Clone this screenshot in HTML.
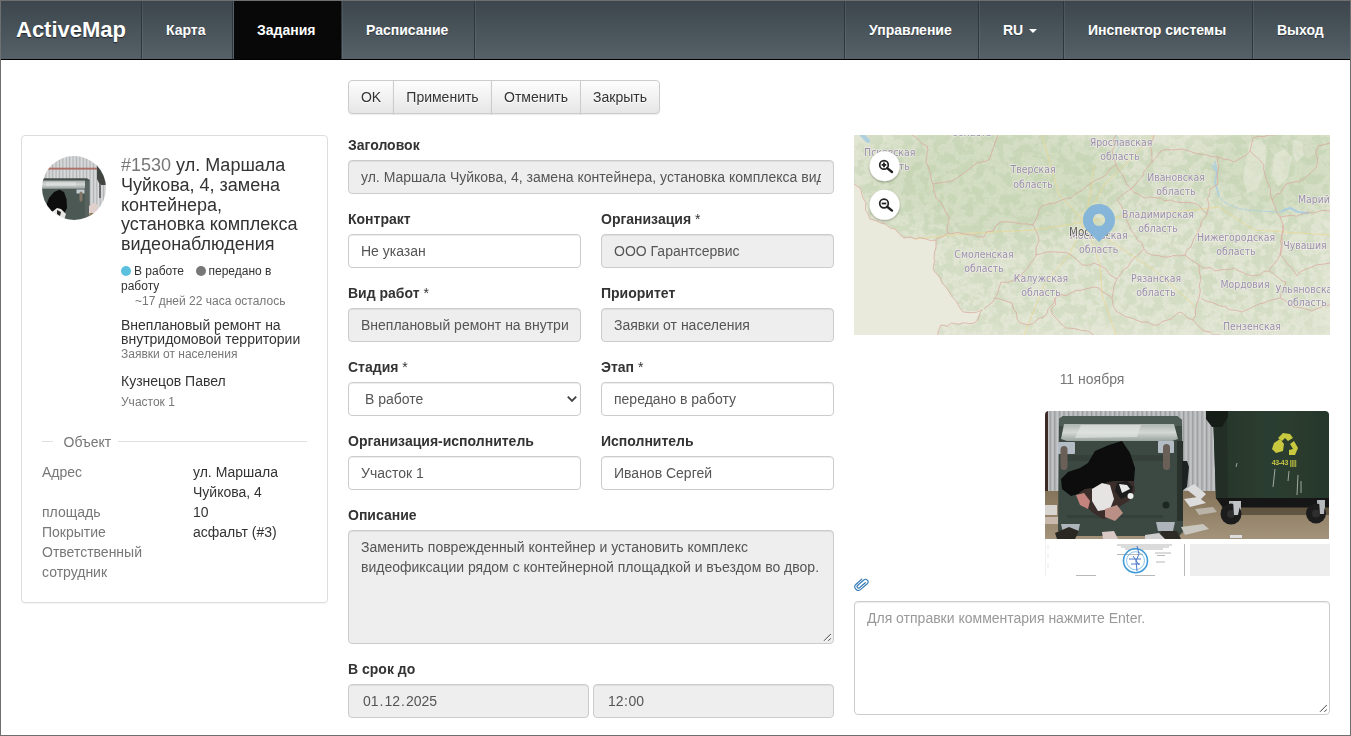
<!DOCTYPE html>
<html lang="ru">
<head>
<meta charset="utf-8">
<title>ActiveMap</title>
<style>
*{box-sizing:border-box;}
html,body{margin:0;padding:0;}
body{width:1351px;height:736px;overflow:hidden;background:#fff;font-family:"Liberation Sans",Arial,sans-serif;font-size:14px;line-height:20px;color:#333;position:relative;}
#frame{position:absolute;left:0;top:0;width:1351px;height:736px;border:1px solid #6f6f6f;pointer-events:none;z-index:100;}
#page{position:absolute;left:0;top:0;width:1351px;height:736px;overflow:hidden;}
.abs{position:absolute;}

/* NAVBAR */
#nav{position:absolute;left:1px;top:1px;width:1349px;height:59px;background:linear-gradient(to bottom,#3c464c 0%,#556068 100%);border-bottom:1px solid #000;}
#nav .brand{position:absolute;left:15px;top:0;height:58px;line-height:58px;font-size:22px;font-weight:bold;color:#fff;text-shadow:0 1px 1px rgba(0,0,0,.6);}
#nav .it{position:absolute;top:0;height:58px;line-height:58px;font-size:14px;font-weight:bold;color:#fff;text-align:left;padding-left:24px;white-space:nowrap;border-left:1px solid #2f373c;box-shadow:inset 1px 0 0 rgba(255,255,255,.07);text-shadow:0 1px 0 rgba(0,0,0,.4);}
#nav .it.act{background:linear-gradient(to right,#56626b 0,#56626b 1px,#080808 1px,#080808 100%);box-shadow:none;}
#nav .sep{position:absolute;top:0;height:58px;width:1px;background:#2f373c;}
.caret{display:inline-block;width:0;height:0;margin-left:2px;vertical-align:middle;border-top:4px solid #fff;border-right:4px solid transparent;border-left:4px solid transparent;}

/* BUTTONS */
#btns{position:absolute;left:348px;top:80px;height:34px;display:flex;}
#btns .b{height:34px;padding:6px 0;text-align:center;border:1px solid #ccc;margin-left:-1px;font-size:14px;line-height:20px;color:#333;background:linear-gradient(to bottom,#fdfdfd 0%,#e6e6e6 100%);text-shadow:0 1px 0 #fff;white-space:nowrap;box-shadow:inset 0 1px 0 rgba(255,255,255,.15),0 1px 1px rgba(0,0,0,.075);}
#btns .b:first-child{margin-left:0;border-radius:4px 0 0 4px;}
#btns .b:last-child{border-radius:0 4px 4px 0;}

/* FORM */
.lbl{position:absolute;font-weight:bold;font-size:14px;line-height:20px;color:#333;white-space:nowrap;}
.inp{position:absolute;height:34px;border:1px solid #ccc;border-radius:4px;background:#fff;box-shadow:inset 0 1px 1px rgba(0,0,0,.075);padding:6px 12px;font-size:14px;line-height:20px;color:#555;white-space:nowrap;overflow:hidden;}
.inp.dis{background:#eee;}

/* LEFT PANEL */
#panel{position:absolute;left:21px;top:135px;width:307px;height:468px;border:1px solid #ddd;border-radius:4px;background:#fff;box-shadow:0 1px 1px rgba(0,0,0,.05);}
#ava{position:absolute;left:42px;top:156px;width:64px;height:64px;border-radius:50%;overflow:hidden;}
#ttl{position:absolute;left:121px;top:156px;width:190px;font-size:18px;line-height:19.8px;color:#333;}
#ttl .n{color:#777;}
.t12{position:absolute;font-size:12px;line-height:15px;color:#333;white-space:nowrap;}
.t14{position:absolute;font-size:14px;line-height:20px;color:#333;white-space:nowrap;}
.g{color:#777;}
.dot{display:inline-block;width:10px;height:10px;border-radius:50%;vertical-align:-1px;margin-right:3px;}

.ta{position:absolute;border:1px solid #ccc;border-radius:4px;background:#fff;box-shadow:inset 0 1px 1px rgba(0,0,0,.075);padding:6px 12px;font-size:14px;line-height:20px;color:#555;}
.ta.dis{background:#eee;}
.grip{position:absolute;right:2px;bottom:2px;width:10px;height:10px;}
.ds{padding:0 1px;}
.clip{display:block;overflow:hidden;white-space:nowrap;}
.as{font-weight:normal;}
#content{position:absolute;left:0;top:0;width:1351px;height:736px;will-change:transform;}
</style>
</head>
<body>
<div id="page">

<!-- NAVBAR -->
<div id="nav">
  <div class="brand">ActiveMap</div>
  <div class="it" style="left:140px;width:91px;">Карта</div>
  <div class="it act" style="left:231px;width:109px;">Задания</div>
  <div class="it" style="left:340px;width:133px;">Расписание</div>
  <div class="it" style="left:473px;width:10px;border-left:1px solid #2f373c;"></div>
  <div class="it" style="left:843px;width:134px;">Управление</div>
  <div class="it" style="left:977px;width:85px;">RU <span class="caret"></span></div>
  <div class="it" style="left:1062px;width:189px;">Инспектор системы</div>
  <div class="it" style="left:1251px;width:98px;">Выход</div>
</div>

<div id="content">
<!-- BUTTON GROUP -->
<div id="btns">
  <div class="b" style="width:46px">OK</div><div class="b" style="width:99px">Применить</div><div class="b" style="width:90px">Отменить</div><div class="b" style="width:80px">Закрыть</div>
</div>

<!-- LEFT PANEL -->
<div id="panel"></div>
<!--AVA-->
<svg id="ava" width="64" height="64" viewBox="0 0 64 64" style="position:absolute;left:42px;top:156px;border-radius:50%;">
<defs><pattern id="corr2" width="3.400" height="64" patternUnits="userSpaceOnUse"><rect width="3.400" height="64" fill="#cfd0d1"/><rect width=".9" height="64" fill="#b0b2b4"/><rect x="1.900" width=".7" height="64" fill="#dcddde"/></pattern>
<linearGradient id="lid2" x1="0" y1="0" x2="0" y2="1"><stop offset="0" stop-color="#aab1ae"/><stop offset=".45" stop-color="#d3d7d5"/><stop offset="1" stop-color="#9aa29e"/></linearGradient>
<filter id="bl2" x="-5%" y="-5%" width="110%" height="110%"><feGaussianBlur stdDeviation=".5"/></filter></defs>
<g filter="url(#bl2)">
<rect width="64" height="64" fill="url(#corr2)"/>
<rect x="4" y="11.700" width="56" height="1.900" fill="#ad6f67"/>
<path d="M55 9h9v20h-6l-3-6z" fill="#3f4443"/><rect x="57" y="28" width="2" height="14" fill="#6a6e6c"/>
<path d="M0 24l2-1.600h43l2.500 1.600V64H0z" fill="#4c5852"/>
<path d="M0 24l2-1.600h43l2.500 1.600v1H0z" fill="#454d49"/>
<path d="M0 24.600h43l.8 7-1.500 1.200H0z" fill="url(#lid2)"/>
<path d="M4 26h30v4H4z" fill="#e2e5e3" opacity=".55"/>
<path d="M43 24.500h4.500V64H43z" fill="#59645e"/>
<rect x="34.500" y="33.500" width="8" height="4" fill="#c6ccd2"/><rect x="37.500" y="35.500" width="3" height="10" rx="1.500" fill="#85776a"/>
<path d="M3 64L4 50 7 42 12 36 17.500 33.700 22 36 24.500 43 25 52 22 58 21 64Z" fill="#0c0c0c"/>
<path d="M10 56l5-4 4 1 5 5-2 6H9z" fill="#e9e7e5"/><path d="M15 54l4 2-1 4-3-2z" fill="#222"/>
<path d="M47 50l5-3 4 2-1 7-8 3z" fill="#dfd0cb"/>
<rect x="47.500" y="57" width="17" height="8" fill="#8d7a5c"/>
</g>
</svg>
<!--/AVA-->
<div id="ttl"><span class="n">#1530</span> ул. Маршала<br>Чуйкова, 4, замена<br>контейнера,<br>установка комплекса<br>видеонаблюдения</div>
<div class="t12" style="left:121px;top:264px;"><span class="dot" style="background:#5bc0de"></span>В работе</div>
<div class="t12" style="left:195.5px;top:264px;"><span class="dot" style="background:#777"></span>передано в</div>
<div class="t12" style="left:121px;top:279px;">работу</div>
<div class="t12 g" style="left:135px;top:294px;">~17 дней 22 часа осталось</div>
<div class="t14" style="left:121px;top:318px;line-height:14px;">Внеплановый ремонт на<br>внутридомовой территории</div>
<div class="t12 g" style="left:121px;top:347px;">Заявки от населения</div>
<div class="t14" style="left:121px;top:371px;">Кузнецов Павел</div>
<div class="t12 g" style="left:121px;top:395px;">Участок 1</div>
<div class="abs" style="left:42px;top:441px;width:11px;height:1px;background:#e0e0e0;"></div>
<div class="abs" style="left:118px;top:441px;width:189px;height:1px;background:#e0e0e0;"></div>
<div class="t14 g" style="left:63.5px;top:432px;">Объект</div>
<div class="t14 g" style="left:42px;top:462px;">Адрес</div>
<div class="t14" style="left:193px;top:462px;">ул. Маршала<br>Чуйкова, 4</div>
<div class="t14 g" style="left:42px;top:502px;">площадь</div>
<div class="t14" style="left:193px;top:502px;">10</div>
<div class="t14 g" style="left:42px;top:522px;">Покрытие</div>
<div class="t14" style="left:193px;top:522px;">асфальт (#3)</div>
<div class="t14 g" style="left:42px;top:542px;">Ответственный<br>сотрудник</div>


<!-- FORM -->
<div class="lbl" style="left:348px;top:135px;">Заголовок</div>
<div class="inp dis" style="left:348px;top:160px;width:486px;"><span class="clip">ул. Маршала Чуйкова, 4, замена контейнера, установка комплекса видеонаблюдения</span></div>
<div class="lbl" style="left:348px;top:209px;">Контракт</div>
<div class="inp" style="left:348px;top:234px;width:233px;">Не указан</div>
<div class="lbl" style="left:601px;top:209px;">Организация <span class="as">*</span></div>
<div class="inp dis" style="left:601px;top:234px;width:233px;">ООО Гарантсервис</div>
<div class="lbl" style="left:348px;top:283px;">Вид работ <span class="as">*</span></div>
<div class="inp dis" style="left:348px;top:308px;width:233px;"><span class="clip">Внеплановый ремонт на внутридомовой территории</span></div>
<div class="lbl" style="left:601px;top:283px;">Приоритет</div>
<div class="inp dis" style="left:601px;top:308px;width:233px;">Заявки от населения</div>
<div class="lbl" style="left:348px;top:357px;">Стадия <span class="as">*</span></div>
<div class="inp" style="left:348px;top:382px;width:233px;padding-left:16px;">В работе<svg class="chev" width="12" height="8" viewBox="0 0 12 8" style="position:absolute;right:2.3px;top:12.2px;"><path d="M1.8 1.7 L6 5.9 L10.2 1.7" fill="none" stroke="#444" stroke-width="1.9"/></svg></div>
<div class="lbl" style="left:601px;top:357px;">Этап <span class="as">*</span></div>
<div class="inp" style="left:601px;top:382px;width:233px;">передано в работу</div>
<div class="lbl" style="left:348px;top:431px;">Организация-исполнитель</div>
<div class="inp" style="left:348px;top:456px;width:233px;">Участок 1</div>
<div class="lbl" style="left:601px;top:431px;">Исполнитель</div>
<div class="inp" style="left:601px;top:456px;width:233px;">Иванов Сергей</div>
<div class="lbl" style="left:348px;top:505px;">Описание</div>
<div class="ta dis" style="left:348px;top:530px;width:486px;height:114px;">Заменить поврежденный контейнер и установить комплекс видеофиксации рядом с контейнерной площадкой и въездом во двор.<svg class="grip" viewBox="0 0 10 10"><path d="M9.9 3.9 L3.4 10.4 M9.9 8.3 L7.8 10.4" stroke="#fff" stroke-width="1" fill="none"/><path d="M9.9 2.9 L3 9.8 M9.9 7.3 L7.4 9.8" stroke="#444" stroke-width="1" fill="none"/></svg></div>
<div class="lbl" style="left:348px;top:659px;">В срок до</div>
<div class="inp dis" style="left:348px;top:684px;width:241px;padding-left:14px;">01<span class="ds">.</span>12<span class="ds">.</span>2025</div>
<div class="inp dis" style="left:593px;top:684px;width:241px;padding-left:14px;">12<span class="ds" style="padding:0 .5px">:</span>00</div>


<!-- RIGHT -->
<!--MAP-->
<svg id="map" class="abs" style="left:854px;top:135px;" width="476" height="200" viewBox="0 0 476 200">
<defs>
<filter id="fo" x="0" y="0" width="100%" height="100%" color-interpolation-filters="sRGB">
<feTurbulence type="fractalNoise" baseFrequency="0.1" numOctaves="4" seed="7" result="n"/>
<feColorMatrix in="n" type="matrix" values="0 0 0 0 0.77  0 0 0 0 0.83  0 0 0 0 0.70  0 11 0 0 -5.3" result="g"/>
<feComposite in="g" in2="SourceGraphic" operator="in"/>
</filter>
<filter id="fo2" x="0" y="0" width="100%" height="100%" color-interpolation-filters="sRGB">
<feTurbulence type="fractalNoise" baseFrequency="0.24" numOctaves="3" seed="23" result="n"/>
<feColorMatrix in="n" type="matrix" values="0 0 0 0 0.80  0 0 0 0 0.85  0 0 0 0 0.74  12 0 0 0 -5.9" result="g"/>
<feComposite in="g" in2="SourceGraphic" operator="in"/>
</filter>
<radialGradient id="mg" cx="0.33" cy="0.2" r="0.75"><stop offset="0" stop-color="#000" stop-opacity="1"/><stop offset=".4" stop-color="#000" stop-opacity=".85"/><stop offset=".75" stop-color="#000" stop-opacity=".5"/><stop offset="1" stop-color="#000" stop-opacity=".35"/></radialGradient>
<radialGradient id="mg0" cx="0.33" cy="0.2" r="0.8"><stop offset="0" stop-color="#cbd8ba" stop-opacity=".7"/><stop offset=".5" stop-color="#d2ddc2" stop-opacity=".4"/><stop offset="1" stop-color="#dbe2cd" stop-opacity=".25"/></radialGradient>
<filter id="bsh" x="-30%" y="-30%" width="160%" height="170%"><feDropShadow dx="0" dy="1" stdDeviation="1" flood-color="#000" flood-opacity=".35"/></filter>
<clipPath id="lc"><path d="M0 0H476V200H84L87 190L120 188L128 175L109 177L102 166L88 148L79 133L82 105L50 103L41 94L16 84L7 54L0 49Z"/></clipPath><filter id="b9" x="-20%" y="-20%" width="140%" height="140%"><feGaussianBlur stdDeviation="14"/></filter>
<clipPath id="mc"><rect width="476" height="200"/></clipPath>
</defs>
<g clip-path="url(#mc)">
<rect width="476" height="200" fill="#e9e9dc"/>
<g clip-path="url(#lc)">
<g filter="url(#b9)"><rect width="476" height="200" fill="#d5dfc6" opacity=".38"/><ellipse cx="150" cy="42" rx="115" ry="62" fill="#c9d7b7" opacity=".55"/><ellipse cx="425" cy="28" rx="75" ry="52" fill="#c9d7b7" opacity=".55"/><ellipse cx="35" cy="40" rx="45" ry="50" fill="#cfdcbf" opacity=".4"/><ellipse cx="300" cy="40" rx="70" ry="40" fill="#cfdcbf" opacity=".3"/></g>
<g filter="url(#fo)"><g filter="url(#b9)"><rect width="476" height="200" fill="#000" opacity=".42"/><ellipse cx="150" cy="42" rx="115" ry="62" fill="#000" opacity=".6"/><ellipse cx="425" cy="28" rx="75" ry="52" fill="#000" opacity=".6"/><ellipse cx="35" cy="40" rx="45" ry="50" fill="#000" opacity=".4"/><ellipse cx="300" cy="40" rx="70" ry="40" fill="#000" opacity=".3"/><ellipse cx="370" cy="120" rx="40" ry="30" fill="#000" opacity=".2"/></g></g>
<g filter="url(#fo2)" opacity=".6"><g filter="url(#b9)"><rect width="476" height="200" fill="#000" opacity=".45"/><ellipse cx="150" cy="42" rx="115" ry="62" fill="#000" opacity=".5"/><ellipse cx="425" cy="28" rx="75" ry="52" fill="#000" opacity=".5"/></g></g>
</g>
<g fill="#eeeee2" opacity=".45"><path d="M395 8l12-4 6 10-2 22-8 18-10 4-4-16 4-20zM420 20l10-6 8 8-4 20-10 10-6-12zM440 5l8 2 2 14-8 6-4-10z"/></g>
<g fill="none" stroke="#aecfe0" stroke-width="1.6" stroke-linecap="round"><path d="M361 27l2 10-2 10 4 14M358 30l4 6"/><path d="M428 76l8-3 8 4 10 1" stroke-width="2.2"/><path d="M8 0l6 6" stroke-width="4"/><path d="M364 61q10 12 30 14t34 2" stroke-width=".8"/><path d="M262 0l4 10-6 12" stroke-width=".8"/></g>
<g fill="none" stroke="#ead68f" stroke-width=".8" opacity=".9"><path d="M231 87L205 60 196 28 188 0M231 87L180 95 120 98 60 104M231 87L215 120 190 150 170 200M231 87L246 130 248 160 262 200M231 87L262 110 300 135 340 170M231 87L275 80 330 76 365 72 400 95 476 100M231 87L250 50 280 20 300 0M231 87L236 60 240 30"/><circle cx="231" cy="87" r="5"/><circle cx="231" cy="87" r="10" stroke-width=".5"/></g>
<path d="M0 49 L7 54 L7.7 59.1 L9.6 64.3 L11.9 67.6 L11.4 75.1 L13.7 78.1 L16 84 L22.6 85.9 L27.1 87.9 L31.4 88.9 L36.4 93.2 L41 94 L45.6 99.3 L50 103 L55.9 101.9 L61.5 104 L65.4 102.5 L72.5 104.2 L77.4 105.9 L82 105 L82.1 111.9 L80.5 117.2 L80 123.2 L80.8 126.1 L79 133 L80.8 137.1 L86.5 142.8 L88 148 L91.9 151.9 L95 156.6 L98 161.8 L102 166 L105.8 172.8 L109 177 L115.9 177.7 L122.8 177.2 L128 175 L125.9 178.3 L123.8 185.2 L120 188 L115.8 188.6 L109.7 187.7 L104.6 189.2 L97.3 187.9 L93.6 191.2 L87 190 L84.2 196 L84 200 M58 0 L62.7 2.5 L67.3 8.2 L73 11 L73.9 14.9 L72.7 20.2 L72 27 L74.4 32 L76.7 39.5 L77.3 45.1 L79 49 L79.9 54.6 L82 63 L86.3 66.5 L90 73 L91.5 77.2 L95 82 L95 86.2 L92.9 93.8 L94 98 L87.4 102.5 L82 104 M79 49 L86.6 47.6 L91.5 47.1 L98 46 L102.9 43.1 L107 40 L112.6 36.4 L115.4 33.9 L120 30 L124.5 27.4 L132.2 26.1 L136 24 L137.8 17.1 L139.1 13.6 L141 8 L144 0 M94 98 L97.5 98.7 L104.4 97.3 L109 99 L114.7 99.6 L120.1 100 L125.4 102 L130 102 L132.7 96.8 L139.1 96 L142 90.6 L147 87 L152.6 86.8 L157.2 87.1 L163 88 L167.9 89 L173 88.9 L179 90 L182.1 83.7 L183.7 81.3 L185.1 74.9 L188 71 L195.5 68.7 L201 68 L205.3 66.1 L212.3 63.4 L217 63 L221 59.1 L227.3 56 L231.9 51.7 L234.9 49.9 L240 46 L247.2 42.8 L252 40 L256.1 33.8 L262 30 L260.1 22 L258 16 L260.3 11.7 L259.7 4.6 L262 0 M179 90 L182 95.8 L184 100.2 L185 106 L182.3 112.3 L182 120 L180.3 123.6 L176.2 128.4 L174 133 L170.1 136.4 L168 139.2 L163 144 L156.1 146.4 L153.5 147.6 L147 147 L144.8 153.8 L144.4 156.8 L141 163 L138.1 167.7 L134.2 170.4 L130 174 M182 120 L187.7 118.5 L193.8 116.6 L201 117 L206.6 117.3 L212.7 117.5 L217 120 L223.8 125.6 L228 130 L235.4 130.3 L240 128 L247.3 131.2 L252 134 L255.9 139.8 L263 144 M141 163 L145.6 164 L152.9 166.4 L158 168 L159.7 174.4 L162.4 177.5 L163.2 184.2 L166 188 L174 190 L179.3 188.2 L184.2 183.7 L190 182 L192.9 178.3 L194.4 173.4 L199.6 168.7 L201 163 L207.4 159.8 L212.1 160.8 L217 158 L221.3 155.8 L227.8 155.1 L234 153.4 L240 152 L245.4 153.2 L247.6 156.3 L252.3 158.9 L258 163 M201 163 L201.5 169.5 L197.7 173.7 L198 179 L202.1 183.1 L206.9 188.8 L212 193 L217.8 193.3 L222 194 L227.3 195.4 L234 196 L240 200 M298 27 L303.2 21.1 L307 16 L312 14.3 L319.3 15 L326 14 L333.2 15.3 L339.6 17.7 L345 19 L351.1 19.6 L357.7 21.6 L364 22 M262 30 L264.7 35.4 L267.9 38.8 L271.1 45 L272.6 49 L277 54 L280.3 50.7 L285.4 44.6 L288.8 41.4 L290.2 35.9 L293.3 32.5 L298 27 L297.9 22.6 L297.6 16.2 L296 10 L298.7 5.2 L300 0 M277 54 L280.1 57.3 L284.1 58.9 L290 63 L296.3 61.9 L299.5 62.5 L307.4 63.2 L310.1 65.7 L317 65 L321.3 66.9 L328.6 67.6 L334.9 67.5 L339 68 L344.6 70.2 L349.2 75.4 L353 79 L354.3 72.7 L355 70.4 L353.4 63.4 L355.6 60 L356 54 L364 49 L363.2 42.6 L363.2 38.6 L364.8 32.5 L363.6 27.1 L364 22 M277 54 L271.9 57.4 L266.3 61.3 L263 65 L267.2 70.4 L269.1 75.2 L271 82 L274.6 89.3 L277 95 L280.8 99.8 L283.4 105 L288 108.1 L290 114 L292.7 117.8 L298 120 L305 120.7 L309.2 122 L315 122 L319.3 120.6 L324.7 120.9 L331 120 L333.1 114.5 L336.9 112.1 L339 106 L340.7 102.2 L343.4 98.1 L346.3 91.8 L347.4 86.5 L350.6 83.1 L353 79 M263 144 L260.3 149.9 L259.1 157.5 L258 163 L259.4 171.6 L263 177 L267.7 179.3 L272.4 182.1 L278.3 183.2 L282 185 L287.4 187 L294.1 187.2 L299.2 190.2 L304 190 L308.3 186.5 L312 185.5 L317.8 183.7 L322.7 178.8 L326 177 L329.3 178.9 L333.7 183 L339 185 L341.6 180.8 L341.2 175.2 L342.9 168.3 L345 163 L346.4 155.3 L345 151.4 L347 144 L345.3 136.5 L345 130 L340.6 127.2 L334.1 122.8 L331 120 M290 114 L285.1 118.6 L279.7 123.6 L276 128 L274.2 131.7 L269.6 134.8 L265.5 140.5 L263 144 M345 130 L349.1 133.2 L357 132.7 L361 136 L368.7 134.6 L374.5 134.8 L380 133 L384.1 135.6 L390 138 L393.5 139.8 L399 141 L405.8 139.9 L409.8 136.4 L415 136 L418.6 130.2 L423 125.9 L426 120 L426.7 114 L427.5 110.4 L426.5 106.2 L428.5 98.8 L429.9 93.9 L429 90 L426 82 M347 163 L351.2 165.7 L356.8 167.2 L361.7 168.9 L366 171 L370.9 171.5 L375.6 174.7 L383.3 175.6 L388 177 L394.3 174.3 L398.3 172.1 L405.7 168.8 L410 168 L415.3 165.5 L421.5 164.2 L426 163 L427.5 157.4 L430.1 153.2 L432 147 L427.3 145.4 L422.3 140.8 L418 137.5 L415 136 M364 22 L370.2 24.4 L373.7 24.3 L380 27 L385.1 24.1 L391.7 20.5 L396 16 L397.8 8.4 L399 3 L404.2 1.3 L410.1 1.7 L414.5 -0 L421 0 M418 65 L422.4 59.5 L426 58.3 L429.9 52.6 L432 49 L438.5 47.3 L445.1 46.5 L451 43 L457.1 37.4 L462 33 L463.7 27.4 L463.3 22.7 L461.9 17.4 L464 11 L470.5 9.5 L476 8 M418 65 L420.7 70.5 L422.4 76.4 L426 82 L430 81.3 L437.5 80.3 L442.7 81.2 L448 79 L454.9 77.2 L460.1 78.2 L463.4 76.8 L469.5 75.2 L476 76 M429 90 L428.6 96.4 L427.4 101.2 L428.1 103.8 L428.1 110.3 L427.9 115.7 L426 120 L430.2 123.7 L433.8 129.8 L437.4 132.4 L440.4 136.8 L443 141 L446.5 136.8 L451.1 134.5 L456.2 132.7 L462 130 L469.6 129.1 L476 128 M339 185 L342.4 189.1 L345.7 192.2 L350 196 L356.2 197 L359.6 199.9 L366 200 M426 163 L431.4 165.6 L434.9 169.1 L440 172 L446.3 172.4 L450.4 173.7 L458 176 L464.9 172.9 L469.9 171 L476 170 M396 16 L399.7 19.6 L405 24.3 L410 30 L409.6 33.8 L411.2 40 L412 43.5 L414.4 49.7 L416.4 53.6 L416.5 59.7 L418 65 " fill="none" stroke="#dba79d" stroke-width=".9" stroke-linejoin="round" opacity=".8"/>
<g font-family="'DejaVu Sans Condensed','DejaVu Sans',sans-serif" font-stretch="condensed" font-size="10.4" fill="#9b8fae" stroke="#f3f1ea" stroke-opacity=".7" stroke-width="1.4" paint-order="stroke" stroke-linejoin="round"><text x="118" y="1" text-anchor="middle">область</text><text x="35.7" y="20.5" text-anchor="middle">Псковская</text><text x="36" y="34.5" text-anchor="middle">область</text><text x="179" y="38" text-anchor="middle">Тверская</text><text x="179" y="53" text-anchor="middle">область</text><text x="130" y="123" text-anchor="middle">Смоленская</text><text x="130" y="137" text-anchor="middle">область</text><text x="187" y="147" text-anchor="middle">Калужская</text><text x="187" y="161" text-anchor="middle">область</text><text x="267" y="11" text-anchor="middle">Ярославская</text><text x="266" y="24.5" text-anchor="middle">область</text><text x="322" y="46" text-anchor="middle">Ивановская</text><text x="322" y="60" text-anchor="middle">область</text><text x="304" y="83" text-anchor="middle">Владимирская</text><text x="304" y="96.5" text-anchor="middle">область</text><text x="382" y="106" text-anchor="middle">Нижегородская</text><text x="382" y="120" text-anchor="middle">область</text><text x="451" y="114" text-anchor="middle">Чувашия</text><text x="302" y="147" text-anchor="middle">Рязанская</text><text x="302" y="161" text-anchor="middle">область</text><text x="391" y="153" text-anchor="middle">Мордовия</text><text x="453" y="171" text-anchor="middle">область</text><text x="398" y="195" text-anchor="middle">Пензенская</text><text x="244.7" y="104.4" text-anchor="middle">Московская</text><text x="244.7" y="117.5" text-anchor="middle">область</text><text x="444" y="68">Марий Эл</text><text x="421.6" y="158">Ульяновская</text></g>
<text x="215" y="101.4" font-family="'DejaVu Sans Condensed','DejaVu Sans',sans-serif" font-stretch="condensed" font-size="11.5" fill="#5e5e5e" stroke="#f3f1ea" stroke-opacity=".7" stroke-width="1.4" paint-order="stroke">Москва</text>
<path d="M245 107L232.300 94.700A16 16 0 1 1 257.700 94.700ZM245 78.800a6.100 6.100 0 1 0 .01 0Z" fill="#85b6d9" fill-rule="evenodd"/>
<g filter="url(#bsh)"><circle cx="30.600" cy="31.200" r="15" fill="#fff"/><circle cx="30.600" cy="69.800" r="15" fill="#fff"/></g>
<g fill="none" stroke="#222" stroke-width="1.700"><circle cx="30" cy="29.900" r="4.300"/><path d="M33.200 33.100L38 37" stroke-width="2.400" stroke-linecap="round"/><path d="M27.700 29.900h4.600M30 27.600v4.600" stroke-width="1.800"/>
<circle cx="30" cy="68.500" r="4.300"/><path d="M33.200 71.700L38 75.600" stroke-width="2.400" stroke-linecap="round"/><path d="M27.700 68.500h4.600" stroke-width="1.800"/></g>
</g>
</svg>
<!--/MAP-->
<!--PHOTO-->
<svg id="photo" class="abs" style="left:1045px;top:411px;" width="284" height="128" viewBox="0 0 284 128">
<defs>
<pattern id="corr" width="4.6" height="128" patternUnits="userSpaceOnUse"><rect width="4.6" height="128" fill="#b7b9ba"/><rect x="0" width="1.2" height="128" fill="#999b9d"/><rect x="2.6" width=".9" height="128" fill="#c9cbcc"/></pattern>
<linearGradient id="gnd" x1="0" y1="0" x2="0" y2="1"><stop offset="0" stop-color="#85745a"/><stop offset="1" stop-color="#a3937a"/></linearGradient>
<linearGradient id="lid" x1="0" y1="0" x2="0" y2="1"><stop offset="0" stop-color="#aeb6b1"/><stop offset=".5" stop-color="#d3d8d5"/><stop offset="1" stop-color="#9aa39e"/></linearGradient>
<linearGradient id="rc" x1="0" y1="0" x2="1" y2="0"><stop offset="0" stop-color="#27352b"/><stop offset=".5" stop-color="#2b3e30"/><stop offset="1" stop-color="#27382c"/></linearGradient>
<clipPath id="pc"><path d="M0 4a4 4 0 0 1 4-4h276a4 4 0 0 1 4 4v124H0z"/></clipPath>
<filter id="bl" x="-5%" y="-5%" width="110%" height="110%"><feGaussianBlur stdDeviation=".5"/></filter>
</defs>
<g clip-path="url(#pc)"><g filter="url(#bl)">
<rect width="284" height="128" fill="url(#corr)"/>
<rect x="0" y="0" width="3" height="95" fill="#3b2b27"/>
<rect x="0" y="80" width="284" height="48" fill="url(#gnd)"/>
<!-- litter between -->
<path d="M141 78l8-5 12 10-6 6zM139 88l14-2 8 6-16 4z" fill="#dcdcdc"/><path d="M150 98l18-2 4 5-18 3z" fill="#b9b3a8"/>
<rect x="0" y="94" width="12" height="10" fill="#d8d4cf"/><rect x="0" y="106" width="14" height="7" fill="#c9b9ad"/>
<!-- left container -->
<path d="M14 8l4-3h114l5 4 1 112-4 4H20l-7-5z" fill="#3b4943"/>
<path d="M14 8l4-3h114l5 4v6H14z" fill="#4d5c55"/>
<path d="M19 13h110l4 15-6 2H22l-6-2z" fill="url(#lid)"/>
<path d="M36 14l60 0 -4 12-62 1z" fill="#e4e8e6" opacity=".6"/>
<path d="M132 30h6v80h-6z" fill="#2a332f"/>
<path d="M137 50h5l2 6-2 20-5 4z" fill="#1d2321"/>
<path d="M22 44h100v6H22zM22 104h96v3H22z" fill="#34413b"/>
<!-- brackets & wheels -->
<rect x="13" y="31" width="17" height="12" rx="1" fill="#b4bcc6"/><rect x="113" y="30" width="16" height="12" rx="1" fill="#b4bcc6"/>
<rect x="15.500" y="35" width="7" height="24" rx="3.500" fill="#6b6058"/><rect x="118" y="33" width="7" height="26" rx="3.500" fill="#6b6058"/>
<path d="M16 113h19l-2 9H18z" fill="#aeb5ba"/><path d="M111 111h19l-2 9h-15z" fill="#aeb5ba"/>
<path d="M10 122l14-6 10 4-4 8H12z" fill="#2a2622"/><path d="M116 120l16 0 4 8h-22z" fill="#2f2a26"/>
<!-- hole -->
<path d="M64 34L77 30 85 42 90 57 89 70 75 70 63 71 52 77 40 78 33 83 26 85 17 78 16 68 23 61 35 57 43 52 50 40Z" fill="#0b0b0b"/>
<!-- trash in hole -->
<path d="M33 83l7-5 12-1 11-6 12-1h14l1 10-6 10-10 6-4 10-12 2-10-6-8-8z" fill="#3a2f2c"/>
<path d="M47 78l10-6 8 2 4 14-4 10-12 2-6-10z" fill="#e6e4e2"/>
<path d="M31 84l8-2 6 8-2 8-8-4z" fill="#c4837c"/><path d="M60 98l12-4 6 8-8 8-10-4z" fill="#b98f86"/>
<path d="M72 72l10-2 6 6-2 8-10 4-6-8z" fill="#1a1a1a"/><path d="M74 73l8 1 3 4-8 4z" fill="#e9e9e9"/><circle cx="85.500" cy="85" r="3" fill="#efefef"/>
<circle cx="121" cy="94" r="3.500" fill="#1f2623"/>
<!-- litter front -->
<path d="M57 121l12-1 4 8H58z" fill="#d9c9c4"/><path d="M100 124l14-2 6 6H100z" fill="#cfcfcf"/><path d="M136 116l22-3 6 5-24 6z" fill="#c9c6c0"/><rect x="185" y="124" width="12" height="3" fill="#ddd"/>
<!-- right container -->
<path d="M168 0H284V88H171z" fill="url(#rc)"/>
<path d="M168 0h14l1 88h-12z" fill="#222e26"/>
<path d="M161 0h22v6l-6 10h-10l-6-8z" fill="#171d19"/>
<path d="M171 87h113v10H178z" fill="#141815"/>
<path d="M176 96h108v8H182z" fill="#4b4032" opacity=".7"/>
<rect x="184" y="90" width="12" height="14" fill="#b3b7ba"/><rect x="272" y="89" width="8" height="14" fill="#a9adb0"/>
<circle cx="186" cy="103" r="10.500" fill="#1b1b1b"/><circle cx="186" cy="103" r="4" fill="#2e2e2e"/>
<circle cx="271" cy="102.500" r="10" fill="#1b1b1b"/><circle cx="271" cy="102.500" r="4" fill="#2e2e2e"/>
<path d="M188 90h8l-3 14h-4z" fill="#c0c4c7"/><path d="M274 89h6l-1 14h-4z" fill="#b5b9bc"/>
<!-- recycle symbol -->
<g fill="#c9c941"><path d="M233 27l5-5 7 1 3 4-5 3-3-3-3 3z"/><path d="M249 30l4 7-3 7-6 0 0-5 4-1-3-5z"/><path d="M229 32l6-4 4 5-1 7-7 2-4-4z"/></g>
<text x="239" y="54" text-anchor="middle" font-family="'Liberation Sans',sans-serif" font-weight="bold" font-size="7" fill="#c5c545" letter-spacing="-.3">43-43 ||||</text>
<g stroke="#cfd3cc" stroke-width=".9" opacity=".8"><path d="M191 56l1-4M230 58l-2 18M244 60l-1 10M253 64l-1 20M256 70v12"/></g>
</g></g>
</svg>
<!--/PHOTO-->
<!--RIGHT-->
<div class="t14 g" style="left:854px;top:369px;width:476px;text-align:center;">11 ноября</div>
<svg class="abs" style="left:1045px;top:539px;" width="285" height="37" viewBox="0 0 285 37">
<rect x="0" y="0" width="140" height="37" fill="#fff"/>
<rect x="0" y="0" width="1" height="37" fill="#f0f0f0"/>
<rect x="139" y="5" width="1" height="32" fill="#b9b9b9"/>
<rect x="145" y="5" width="140" height="32" fill="#eee"/>
<g stroke="#9a9a9a" stroke-width=".7"><path d="M72 6h55M76 8h48M80 10h38M72 15.500h26M110 14h16M112 16.500h8M111 23h9M31 36.500h20M90 36.500h20"/></g>
<g stroke="#e3e3e3" stroke-width=".8"><path d="M3 6v4M3 14v5M3 24v5"/></g>
<circle cx="90.500" cy="21.700" r="12" fill="none" stroke="#3f9bd8" stroke-width="1.600"/>
<circle cx="90.500" cy="21.700" r="9" fill="none" stroke="#6eb4e3" stroke-width=".8"/>
<path d="M92 7l2 8-3 7 1 10M84 20h12M86 25h9M88 17l6 9" stroke="#4a78c8" stroke-width="1" fill="none"/>
</svg>
<svg class="abs" style="left:853px;top:577px;" width="17" height="15" viewBox="0 0 17 15">
<path d="M12.200 4.800L5.900 10.300a1.650 1.650 0 0 1-2.200-2.450L10.600 1.900a2.700 2.700 0 0 1 3.650 4L6.900 12.300a3.800 3.800 0 0 1-5.100-5.600L8.300 1" transform="translate(1.1 1.3) scale(.92)" fill="none" stroke="#337ab7" stroke-width="1.250" stroke-linecap="round"/>
</svg>
<div class="ta" style="left:854px;top:601px;width:476px;height:114px;color:#999;">Для отправки комментария нажмите Enter.<svg class="grip" viewBox="0 0 10 10"><path d="M9.900 3.900 L3.400 10.400 M9.900 8.300 L7.800 10.400" stroke="#fff" stroke-width="1" fill="none"/><path d="M9.900 2.900 L3 9.800 M9.900 7.300 L7.400 9.800" stroke="#444" stroke-width="1" fill="none"/></svg></div>
<!--/RIGHT-->

</div><!--/content-->
</div>
<div id="frame"></div>
</body>
</html>
